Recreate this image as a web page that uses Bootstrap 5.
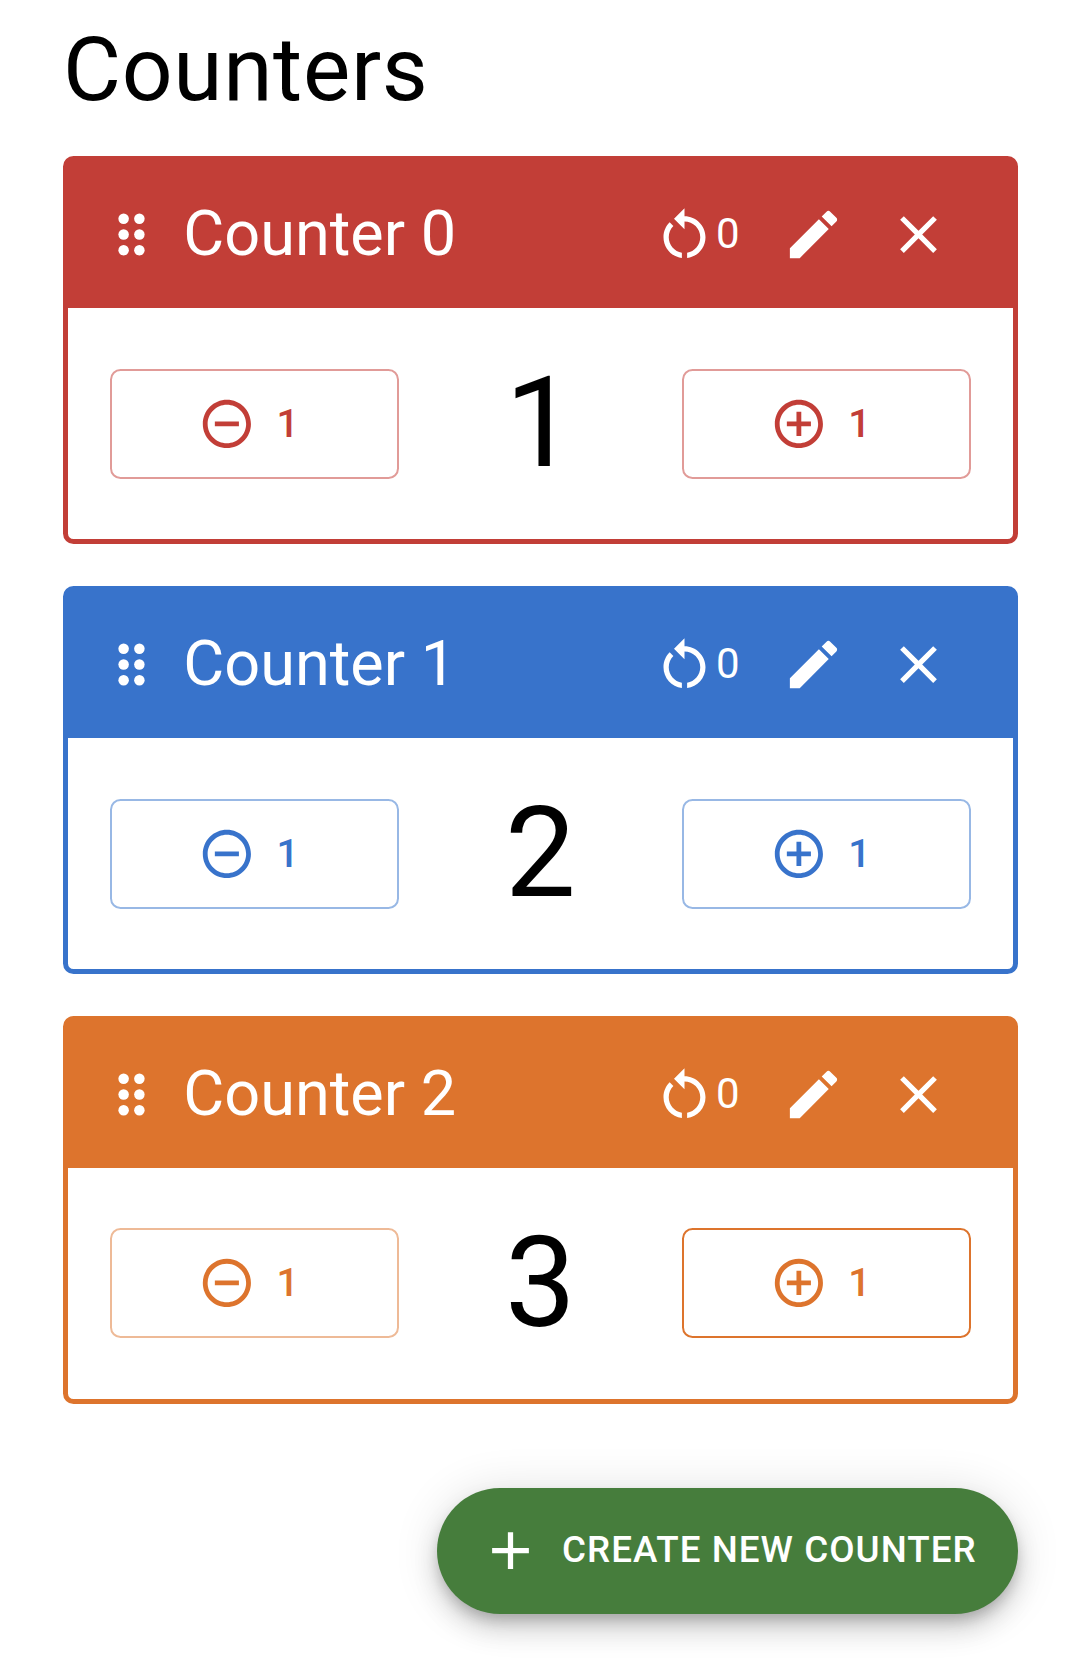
<!DOCTYPE html>
<html lang="en">
<head>
<meta charset="utf-8">
<meta name="viewport" content="width=device-width, initial-scale=1">
<title>Counters</title>
<link href="https://cdn.jsdelivr.net/npm/bootstrap@5.3.0/dist/css/bootstrap.min.css" rel="stylesheet">
<style>
body { font-family: Roboto, "Liberation Sans", sans-serif; color: #000; background: #fff; }
.page { width: 955px; margin-left: 63px; padding-top: 18px; }
.page-title { font-size: 89.25px; line-height: 104px; letter-spacing: .656px; font-weight: 400; margin: 0 0 34px; }
.counter { --tone: #c23e37; --edge: #e19b98; height: 388px; border: 5px solid var(--tone); border-radius: 10.5px; margin-bottom: 42px; background: #fff; }
.counter-blue { --tone: #3873cb; --edge: #98b8e5; }
.counter-orange { --tone: #dd742d; --edge: #eeba97; }
.counter-head { height: 147px; background: var(--tone); color: #fff; padding: 0 63px 2px 32px; }
.counter-name { font-size: 63px; line-height: 84px; margin-left: 20.25px; font-weight: 400; }
.counter-head svg { width: 63px; height: 63px; fill: currentColor; flex: none; position: relative; top: 1px; }
.resets { font-size: 42px; line-height: 50px; width: 66px; }
.pencil { margin-right: 42px; }
.counter-body { height: 231px; padding: 0 42px 0 42px; }
.counter-orange .counter-body { padding-bottom: 1px; }
.counter-orange .tally { padding-bottom: 0; }
.step { width: 289px; height: 110px; border: 2px solid var(--edge); border-radius: 10.5px; color: var(--tone); background: #fff; font-size: 39.4px; font-weight: 500; line-height: 46px; padding: 0 11px 0 0; letter-spacing: 1.1px; }
.step svg { width: 57.75px; height: 57.75px; fill: currentColor; margin-right: 20.5px; }
.step-active { border-color: var(--tone); }
.tally { font-size: 126px; line-height: 126px; padding-bottom: 2px; }
.create { width: 581.5px; height: 126px; border-radius: 63px; background: #467d3c; color: #fff; font-size: 36.75px; font-weight: 500; letter-spacing: 1.05px; padding: 0 0 2px 42px; border: 0; margin-top: 84px;
  box-shadow: 0 8px 13px -2.6px rgba(0,0,0,.2), 0 15.75px 26px 0 rgba(0,0,0,.14), 0 2.6px 47px 0 rgba(0,0,0,.12); }
.create svg { width: 63px; height: 63px; fill: currentColor; margin-right: 20.5px; }
</style>
<script src="https://cdn.jsdelivr.net/npm/bootstrap@5.3.0/dist/js/bootstrap.bundle.min.js"></script>
</head>
<body class="min-vh-100">
<svg class="d-none" aria-hidden="true">
  <symbol id="drag" viewBox="0 0 24 24"><circle cx="9" cy="6" r="2"/><circle cx="15" cy="6" r="2"/><circle cx="9" cy="12" r="2"/><circle cx="15" cy="12" r="2"/><circle cx="9" cy="18" r="2"/><circle cx="15" cy="18" r="2"/></symbol>
  <symbol id="restart" viewBox="0 0 24 24"><path d="M12 5V2L8 6l4 4V7c3.31 0 6 2.69 6 6 0 2.97-2.17 5.43-5 5.91v2.02c3.95-.49 7-3.85 7-7.93 0-4.42-3.58-8-8-8zm-6 8c0-1.65.67-3.15 1.76-4.24L6.34 7.34C4.9 8.79 4 10.79 4 13c0 4.08 3.05 7.44 7 7.93v-2.02c-2.83-.48-5-2.94-5-5.91z"/></symbol>
  <symbol id="edit" viewBox="0 0 24 24"><path d="M3 17.25V21h3.75L17.81 9.94l-3.75-3.75L3 17.25zM20.71 7.04c.39-.39.39-1.02 0-1.41l-2.34-2.34a.9959.9959 0 0 0-1.41 0l-1.83 1.83 3.75 3.75 1.83-1.83z"/></symbol>
  <symbol id="close" viewBox="0 0 24 24"><path d="M19 6.41 17.59 5 12 10.59 6.41 5 5 6.41 10.59 12 5 17.59 6.41 19 12 13.41 17.59 19 19 17.59 13.41 12z"/></symbol>
  <symbol id="minus" viewBox="0 0 24 24"><path d="M7 11v2h10v-2H7zm5-9C6.48 2 2 6.48 2 12s4.48 10 10 10 10-4.480 10-10S17.520 2 12 2zm0 18c-4.410 0-8-3.590-8-8s3.590-8 8-8 8 3.590 8 8-3.590 8-8 8z"/></symbol>
  <symbol id="plus" viewBox="0 0 24 24"><path d="M13 7h-2v4H7v2h4v4h2v-4h4v-2h-4V7zm-1-5C6.480 2 2 6.480 2 12s4.480 10 10 10 10-4.480 10-10S17.520 2 12 2zm0 18c-4.410 0-8-3.590-8-8s3.590-8 8-8 8 3.590 8 8-3.590 8-8 8z"/></symbol>
  <symbol id="add" viewBox="0 0 24 24"><path d="M19 13h-6v6h-2v-6H5v-2h6V5h2v6h6v2z"/></symbol>
</svg>
<main class="page">
  <h1 class="page-title">Counters</h1>

  <section class="counter">
    <header class="counter-head d-flex align-items-center">
      <svg><use href="#drag"/></svg>
      <span class="counter-name me-auto">Counter 0</span>
      <svg><use href="#restart"/></svg><span class="resets">0</span>
      <svg class="pencil"><use href="#edit"/></svg>
      <svg><use href="#close"/></svg>
    </header>
    <div class="counter-body d-flex align-items-center justify-content-between">
      <button class="step d-flex align-items-center justify-content-center"><svg><use href="#minus"/></svg>1</button>
      <span class="tally">1</span>
      <button class="step d-flex align-items-center justify-content-center"><svg><use href="#plus"/></svg>1</button>
    </div>
  </section>

  <section class="counter counter-blue">
    <header class="counter-head d-flex align-items-center">
      <svg><use href="#drag"/></svg>
      <span class="counter-name me-auto">Counter 1</span>
      <svg><use href="#restart"/></svg><span class="resets">0</span>
      <svg class="pencil"><use href="#edit"/></svg>
      <svg><use href="#close"/></svg>
    </header>
    <div class="counter-body d-flex align-items-center justify-content-between">
      <button class="step d-flex align-items-center justify-content-center"><svg><use href="#minus"/></svg>1</button>
      <span class="tally">2</span>
      <button class="step d-flex align-items-center justify-content-center"><svg><use href="#plus"/></svg>1</button>
    </div>
  </section>

  <section class="counter counter-orange">
    <header class="counter-head d-flex align-items-center">
      <svg><use href="#drag"/></svg>
      <span class="counter-name me-auto">Counter 2</span>
      <svg><use href="#restart"/></svg><span class="resets">0</span>
      <svg class="pencil"><use href="#edit"/></svg>
      <svg><use href="#close"/></svg>
    </header>
    <div class="counter-body d-flex align-items-center justify-content-between">
      <button class="step d-flex align-items-center justify-content-center"><svg><use href="#minus"/></svg>1</button>
      <span class="tally">3</span>
      <button class="step step-active d-flex align-items-center justify-content-center"><svg><use href="#plus"/></svg>1</button>
    </div>
  </section>

  <button class="create d-flex align-items-center ms-auto text-uppercase"><svg><use href="#add"/></svg>Create new counter</button>
</main>
</body>
</html>
